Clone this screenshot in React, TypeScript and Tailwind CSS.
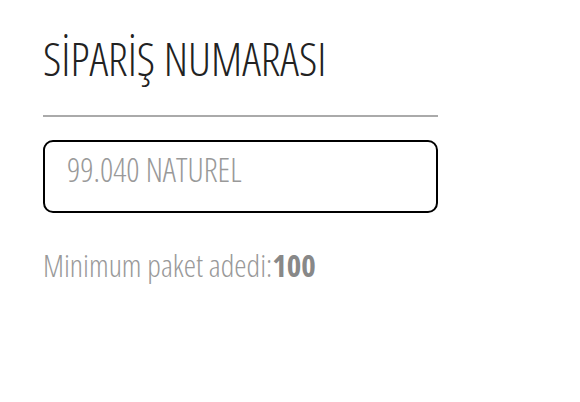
export default function App() {
  return (
    <div className="w-[580px] h-[402px] bg-white font-['Open_Sans',sans-serif] [font-stretch:75%]">
      <div className="pl-[43px] pt-[30px] w-[438px]">
        <h1 className="text-[46px] leading-[56px] font-light text-[#222]">SİPARİŞ NUMARASI</h1>
        <div className="mt-[29px] h-[2px] bg-[#aaaaaa]" />
        <input
          className="mt-[23px] w-full h-[73px] border-2 border-black rounded-[10px] px-[22px] pb-[14px] text-[32.5px] font-light outline-none placeholder:text-[#999]"
          placeholder="99.040 NATUREL"
        />
        <p className="mt-[34px] text-[31px] leading-[36px] font-light text-[#999]">
          Minimum paket adedi:<span className="font-bold text-[#888]">100</span>
        </p>
      </div>
    </div>
  )
}
